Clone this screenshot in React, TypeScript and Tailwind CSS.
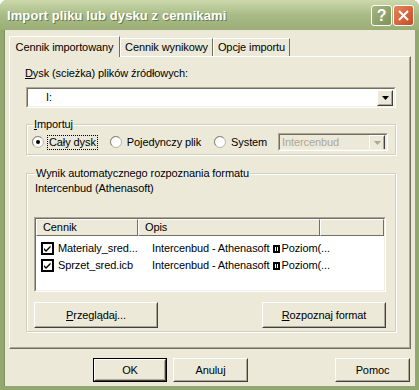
import * as React from "react";

const font = "font-['Liberation_Sans',Arial,sans-serif] text-[11px] leading-[13px] text-black whitespace-nowrap tracking-[-0.1px]";

function RaisedButton({ children, className = "", isDefault = false }: { children: React.ReactNode; className?: string; isDefault?: boolean }) {
    return (
        <div className={`${isDefault ? "border border-black" : ""} ${className}`}>
            <div className="h-full w-full border border-t-white border-l-white border-r-[#404040] border-b-[#404040] bg-[#ece9d8]">
                <div className="flex h-full w-full items-center justify-center border border-t-[#ece9d8] border-l-[#ece9d8] border-r-[#aca899] border-b-[#aca899]">
                    {children}
                </div>
            </div>
        </div>
    );
}

function Sunken({ children, className = "" }: { children: React.ReactNode; className?: string }) {
    return (
        <div className={`border border-t-[#aca899] border-l-[#aca899] border-r-white border-b-white ${className}`}>
            <div className="h-full w-full border border-t-[#716f64] border-l-[#716f64] border-r-[#f1efe2] border-b-[#f1efe2]">{children}</div>
        </div>
    );
}

function DropButton({ disabled = false }: { disabled?: boolean }) {
    return (
        <RaisedButton className="h-[16px] w-[16px]">
            <svg width="7" height="4" viewBox="0 0 7 4">
                <path d="M0 0h7L3.5 4z" fill={disabled ? "#aca899" : "#000"} />
            </svg>
        </RaisedButton>
    );
}

function Radio({ checked = false }: { checked?: boolean }) {
    return (
        <svg width="12" height="12" viewBox="0 0 12 12" className="shrink-0">
            <circle cx="6" cy="6" r="5.5" fill="#fff" stroke="#b8b5a6" />
            <path d="M2 9.5A5 5 0 0 1 9.5 2" fill="none" stroke="#8a887c" />
            {checked && <circle cx="6" cy="6" r="2" fill="#000" />}
        </svg>
    );
}

function Check() {
    return (
        <svg width="13" height="13" viewBox="0 0 13 13" className="shrink-0">
            <rect x="0.5" y="0.5" width="12" height="12" fill="#fff" stroke="#000" />
            <rect x="1.5" y="1.5" width="10" height="10" fill="none" stroke="#000" />
            <path d="M3 6l2 2 4.5-4.5v2L5 10 3 8z" fill="#000" />
        </svg>
    );
}

function Glyph() {
    return (
        <span className="mx-[1px] inline-flex align-[-1px]">
            <span className="inline-block h-[8px] w-[4px] border-2 border-black border-r" />
            <span className="inline-block h-[8px] w-[3px] border-y-2 border-r-2 border-black" />
        </span>
    );
}

function Tab({ label, active = false, className = "" }: { label: string; active?: boolean; className?: string }) {
    return (
        <div
            className={`flex items-center justify-center border-l border-t border-r border-l-white border-t-white border-r-[#716f64] bg-[#ece9d8] ${
                active ? "relative z-10 -mb-[1px] h-[21px] rounded-tl-[2px]" : "h-[18px]"
            } ${className}`}
        >
            {label}
        </div>
    );
}

export default function App() {
    return (
        <div className={`${font} flex h-[390px] w-[419px] flex-col overflow-hidden rounded-t-[7px] bg-[#93a871]`}>
            <div className="flex h-[30px] shrink-0 items-center bg-gradient-to-b from-[#cdd9ad] via-[#a9bb86] to-[#9bae77] pl-[7px] pr-[5px]">
                <div className="flex-1 font-['Liberation_Sans',Arial,sans-serif] text-[13px] font-bold tracking-[0.1px] text-white [text-shadow:1px_1px_0_#6b7d4a]">
                    Import pliku lub dysku z cennikami
                </div>
                <div className="flex h-[21px] w-[21px] items-center justify-center rounded-[3px] border border-white bg-gradient-to-br from-[#a6b783] to-[#7f9259] text-[16px] font-bold text-white">
                    ?
                </div>
                <div className="ml-[1px] flex h-[21px] w-[21px] items-center justify-center rounded-[3px] border border-white bg-gradient-to-br from-[#e6835e] to-[#c74a22]">
                    <svg width="11" height="11" viewBox="0 0 11 11">
                        <path d="M1 1l9 9M10 1l-9 9" stroke="#fff" strokeWidth="2" />
                    </svg>
                </div>
            </div>

            <div className="mx-[4px] mb-[4px] flex flex-1 flex-col border-l border-[#7e9160] bg-[#ece9d8] pl-[4px] pr-[4px] pt-[6px]">
                <div className="flex items-end">
                    <Tab label="Cennik importowany" active className="w-[111px]" />
                    <Tab label="Cennik wynikowy" className="w-[93px]" />
                    <Tab label="Opcje importu" className="w-[77px]" />
                </div>

                <div className="h-[293px] border border-t-white border-l-white border-r-[#716f64] border-b-[#716f64]">
                    <div className="h-full border-r border-b border-r-[#aca899] border-b-[#aca899] pl-[15px] pr-[13px] pt-[10px]">
                        <div>
                            <span className="underline">D</span>ysk (scieżka) plików źródłowych:
                        </div>
                        <Sunken className="ml-[1px] mt-[7px] h-[21px] w-[370px]">
                            <div className="flex h-full items-center bg-white pl-[18px] pr-[1px]">
                                <span className="flex-1">I:</span>
                                <DropButton />
                            </div>
                        </Sunken>

                        <fieldset className="ml-[1px] mt-[10px] h-[37px] w-[370px] border border-[#d0d0bf] pl-[5px] shadow-[inset_1px_1px_0_#fff,1px_1px_0_#fff]">
                            <legend className="ml-[1px] px-[1px]">
                                <span className="underline">I</span>mportuj
                            </legend>
                            <div className="flex items-center pt-[2px]">
                                <Radio checked />
                                <span className="ml-[3px] border border-dotted border-black px-[1px]">Cały dysk</span>
                                <span className="ml-[12px] flex"><Radio /></span>
                                <span className="ml-[5px]">Pojedynczy plik</span>
                                <span className="ml-[13px] flex"><Radio /></span>
                                <span className="ml-[5px]">System</span>
                                <div className="flex-1" />
                                <Sunken className="mr-[7px] h-[18px] w-[110px]">
                                    <div className="flex h-full items-center bg-[#ece9d8] pl-[2px] pr-[1px] text-[#aca899]">
                                        <span className="flex-1">Intercenbud</span>
                                        <div className="h-[14px] w-[16px] overflow-hidden">
                                            <DropButton disabled />
                                        </div>
                                    </div>
                                </Sunken>
                            </div>
                        </fieldset>

                        <fieldset className="ml-[1px] mt-[12px] h-[165px] w-[370px] border border-[#d0d0bf] pl-[7px] shadow-[inset_1px_1px_0_#fff,1px_1px_0_#fff]">
                            <legend className="ml-[1px] px-[1px]">Wynik automatycznego rozpoznania formatu</legend>
                            <div className="ml-[1px] mt-[2px]">Intercenbud (Athenasoft)</div>

                            <Sunken className="mt-[22px] h-[75px] w-[352px]">
                                <div className="h-full bg-white">
                                    <div className="flex h-[17px]">
                                        <div className="flex w-[102px] items-center border border-t-white border-l-white border-r-[#716f64] border-b-[#716f64] bg-[#ece9d8] pl-[6px]">Cennik</div>
                                        <div className="flex w-[182px] items-center border border-t-white border-l-white border-r-[#716f64] border-b-[#716f64] bg-[#ece9d8] pl-[6px]">Opis</div>
                                        <div className="flex-1 border border-t-white border-l-white border-r-[#716f64] border-b-[#716f64] bg-[#ece9d8]" />
                                    </div>
                                    <div className="mt-[4px] flex h-[17px] items-center pl-[5px]">
                                        <Check />
                                        <span className="ml-[4px] w-[91px]">Materialy_sred...</span>
                                        <span className="ml-[3px]">Intercenbud - Athenasoft <Glyph />Poziom(...</span>
                                    </div>
                                    <div className="flex h-[17px] items-center pl-[5px]">
                                        <Check />
                                        <span className="ml-[4px] w-[91px]">Sprzet_sred.icb</span>
                                        <span className="ml-[3px]">Intercenbud - Athenasoft <Glyph />Poziom(...</span>
                                    </div>
                                </div>
                            </Sunken>

                            <div className="mt-[10px] flex w-[352px] justify-between">
                                <RaisedButton className="h-[26px] w-[124px]">
                                    <span><span className="underline">P</span>rzeglądaj...</span>
                                </RaisedButton>
                                <RaisedButton className="h-[26px] w-[124px]">
                                    <span><span className="underline">R</span>ozpoznaj format</span>
                                </RaisedButton>
                            </div>
                        </fieldset>
                    </div>
                </div>

                <div className="mt-[9px] flex pr-[1px]">
                    <RaisedButton isDefault className="ml-[84px] h-[24px] w-[74px]">OK</RaisedButton>
                    <RaisedButton className="ml-[6px] h-[24px] w-[75px]">Anuluj</RaisedButton>
                    <div className="flex-1" />
                    <RaisedButton className="h-[24px] w-[75px]">Pomoc</RaisedButton>
                </div>
            </div>
        </div>
    );
}
